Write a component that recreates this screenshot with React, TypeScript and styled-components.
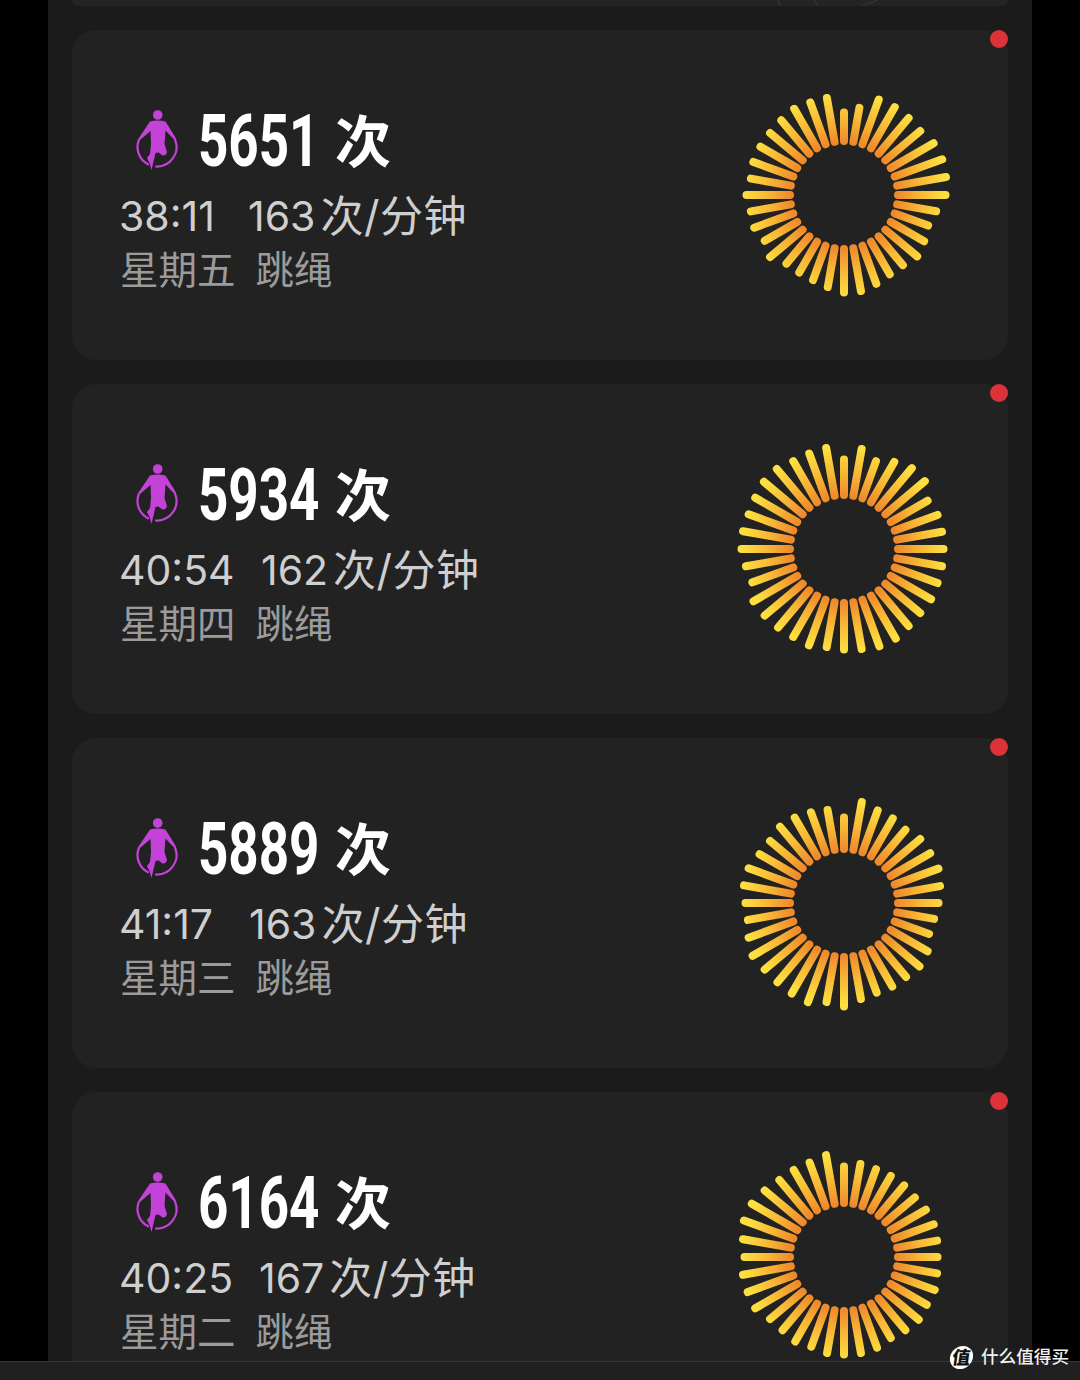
import React from "react";
import styled, { createGlobalStyle } from "styled-components";

const CJK = `Inter, "Noto Sans CJK SC", sans-serif`;

const GlobalStyle = createGlobalStyle`
  html, body {
    margin: 0;
    padding: 0;
    background: #000;
    font-family: ${CJK};
  }
`;

const Screen = styled.div`
  position: relative;
  width: 1080px;
  height: 1380px;
  overflow: hidden;
  background: #000;
`;

const Column = styled.div`
  display: flex;
  flex-direction: column;
  gap: 24px;
  height: 100%;
  margin: 0 48px;
  padding: 0 24px;
  background: #1b1b1b;
`;

const TopStub = styled.div`
  flex: none;
  height: 6px;
  overflow: hidden;
  border-radius: 0 0 24px 24px;
  background: #242424;

  svg {
    display: block;
  }
`;

const Card = styled.section`
  position: relative;
  flex: none;
  display: flex;
  justify-content: space-between;
  height: 330px;
  padding: 72px 46px 0 47px;
  box-sizing: border-box;
  border-radius: 24px;
  background: #222222;
`;

const Dot = styled.span`
  position: absolute;
  top: 0;
  right: 0;
  width: 18px;
  height: 18px;
  border-radius: 50%;
  background: #dd3239;
`;

const Info = styled.div`
  display: flex;
  flex-direction: column;
`;

const Headline = styled.div`
  display: flex;
  align-items: center;
  height: 76px;
  padding-left: 15px;
`;

const SportIcon = styled.svg`
  flex: none;
  width: 47px;
  height: 66px;
  margin: 4px 17px 0 0;
  color: #c342d8;
`;

const Count = styled.span`
  display: inline-block;
  width: 120px;
  margin: 3px 17px 0 0;
  font-family: Roboto, sans-serif;
  font-size: 72px;
  font-weight: 700;
  line-height: 76px;
  color: #fff;
  white-space: nowrap;
  transform: scaleX(0.735);
  transform-origin: left center;
`;

const Unit = styled.span`
  margin-top: -4px;
  font-family: "Noto Sans CJK SC", sans-serif;
  font-size: 56px;
  font-weight: 700;
  line-height: 76px;
  color: #fff;
`;

const Stats = styled.div`
  display: flex;
  height: 46px;
  margin-top: 15px;
  font-size: 41px;
  line-height: 46px;
  color: #cfcfcf;
  white-space: nowrap;
`;

const Time = styled.span<{ $width: number }>`
  flex: none;
  width: ${(p) => p.$width}px;
`;

const PaceUnit = styled.span`
  margin-left: 5px;
  font-size: 43px;
  letter-spacing: 0.5px;
`;

const Meta = styled.div`
  display: flex;
  gap: 20px;
  height: 50px;
  margin: 6px 0 0 1px;
  font-size: 38.5px;
  line-height: 50px;
  color: #9b9b9b;
  white-space: nowrap;
`;

const RingSvg = styled.svg`
  flex: none;
  width: 236px;
  height: 236px;
  margin-top: -25px;
  filter: blur(0.4px);
`;

const BottomBar = styled.div`
  position: absolute;
  left: 0;
  right: 0;
  bottom: 0;
  height: 18px;
  border-top: 1px solid #353535;
  background: #202020;
`;

const Watermark = styled.div`
  position: absolute;
  right: 11px;
  bottom: 11px;
  display: flex;
  align-items: center;
  gap: 8px;
  font-size: 17.6px;
  font-weight: 500;
  line-height: 24px;
  color: #f0f0f0;
`;

const WatermarkLogo = styled.span`
  display: flex;
  align-items: center;
  justify-content: center;
  width: 23px;
  height: 23px;
  border-radius: 50%;
  background: #fff;
  font-size: 18px;
  font-weight: 900;
  color: #111;
  transform: skewX(-8deg);
`;

const rings = [
  [86, 92, 105, 105, 104, 103, 107, 108, 107, 105, 97, 93, 96, 99, 95, 95, 98, 101, 101, 97, 94, 93, 93, 100, 95, 99, 98, 101, 98, 100, 100, 100, 101, 103, 102, 102],
  [93, 105, 97, 104, 109, 109, 100, 103, 103, 103, 103, 103, 104, 103, 104, 107, 107, 105, 104, 103, 106, 105, 106, 107, 108, 101, 103, 106, 106, 105, 106, 108, 108, 105, 105, 106],
  [89, 106, 102, 101, 99, 103, 103, 104, 101, 98, 95, 94, 100, 102, 100, 100, 99, 101, 107, 104, 109, 108, 107, 107, 109, 105, 101, 102, 105, 105, 101, 100, 103, 102, 100, 98],
  [94, 98, 97, 97, 97, 96, 98, 99, 98, 97, 98, 100, 99, 101, 99, 97, 100, 101, 101, 101, 99, 101, 99, 100, 106, 106, 106, 103, 106, 110, 110, 107, 104, 104, 104, 107],
];

const sessions = [
  { count: "5651", time: "38:11", timeWidth: 129, pace: "163", day: "星期五" },
  { count: "5934", time: "40:54", timeWidth: 142, pace: "162", day: "星期四" },
  { count: "5889", time: "41:17", timeWidth: 130, pace: "163", day: "星期三" },
  { count: "6164", time: "40:25", timeWidth: 140, pace: "167", day: "星期二" },
];

const SkippingIcon = () => (
  <SportIcon viewBox="9 9 47 66" aria-hidden="true">
    <circle cx="32.7" cy="15" r="4.8" fill="currentColor" />
    <path
      fill="currentColor"
      d="M25 21.5 Q32.5 19.5 40.5 21.5 L51 38.5 L49.5 40 L40.5 30.5 L39.5 44 L42 52 Q41 56 37.5 55.5 L33.5 52.5 L30.5 53 L26.5 70 L24.5 63 L22 58 L25 54 L26 44 L25.5 31 L15 40 L13.5 38.5 Z"
    />
    <path
      fill="none"
      stroke="currentColor"
      strokeWidth="2.2"
      strokeLinecap="round"
      d="M13.8 40 A19.5 19.5 0 0 0 23 64.3 M31 66.5 A19.5 19.5 0 0 0 50.2 40"
    />
  </SportIcon>
);

const Ring = ({ tips, id }: { tips: number[]; id: string }) => (
  <RingSvg viewBox="-118 -118 236 236" aria-hidden="true">
    <defs>
      <radialGradient id={id} gradientUnits="userSpaceOnUse" cx="0" cy="0" r="102">
        <stop offset="0.52" stopColor="#ef8a2b" />
        <stop offset="0.75" stopColor="#f8b836" />
        <stop offset="1" stopColor="#fde040" />
      </radialGradient>
    </defs>
    {tips.map((tip, i) => {
      const a = (i * 10 * Math.PI) / 180;
      const sin = Math.sin(a);
      const cos = Math.cos(a);
      return (
        <line
          key={i}
          x1={54 * sin}
          y1={-54 * cos}
          x2={(tip - 3.5) * sin}
          y2={-(tip - 3.5) * cos}
          stroke={`url(#${id})`}
          strokeWidth="8"
          strokeLinecap="round"
        />
      );
    })}
  </RingSvg>
);

export default function App() {
  return (
    <Screen>
      <GlobalStyle />
      <Column>
        <TopStub>
          <svg width="936" height="6" viewBox="0 0 936 6" aria-hidden="true">
            <path d="M706 0 L708 6 M742 0 L746 6 M790 6 L806 0" stroke="#363636" strokeWidth="1.2" fill="none" />
          </svg>
        </TopStub>
        {sessions.map((s, i) => (
          <Card key={s.count}>
            <Dot />
            <Info>
              <Headline>
                <SkippingIcon />
                <Count>{s.count}</Count>
                <Unit>次</Unit>
              </Headline>
              <Stats>
                <Time $width={s.timeWidth}>{s.time}</Time>
                <span>{s.pace}</span>
                <PaceUnit>次/分钟</PaceUnit>
              </Stats>
              <Meta>
                <span>{s.day}</span>
                <span>跳绳</span>
              </Meta>
            </Info>
            <Ring tips={rings[i]} id={`ray-${i}`} />
          </Card>
        ))}
      </Column>
      <BottomBar />
      <Watermark>
        <WatermarkLogo>值</WatermarkLogo>
        什么值得买
      </Watermark>
    </Screen>
  );
}
